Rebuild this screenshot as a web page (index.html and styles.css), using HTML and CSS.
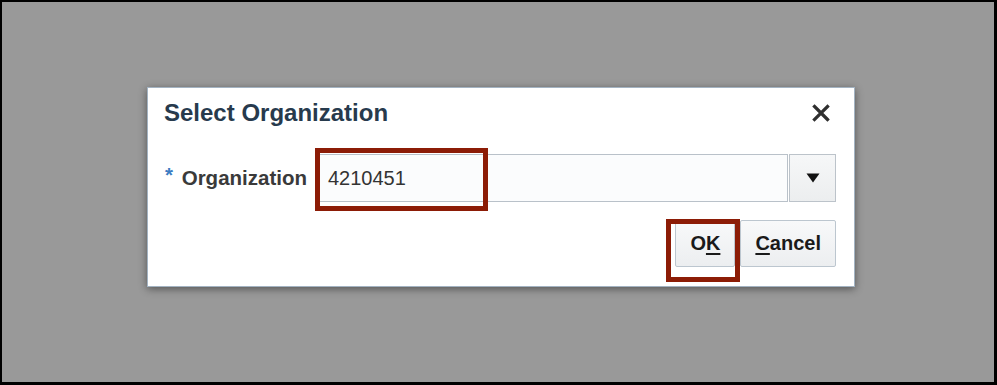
FILE: index.html
```html
<!DOCTYPE html>
<html>
<head>
<meta charset="utf-8">
<link rel="stylesheet" href="styles.css">
</head>
<body>
<div class="frame">
  <div class="dialog">
    <div class="title-row">
      <h1 class="title">Select Organization</h1>
      <svg class="close" width="18" height="18" viewBox="0 0 18 18" aria-label="Close">
        <path d="M2.5 2.5 L15.5 15.5 M15.5 2.5 L2.5 15.5" stroke="#2f2f2f" stroke-width="3.2" stroke-linecap="square" fill="none"/>
      </svg>
    </div>
    <div class="field-row">
      <label class="label"><span class="req">*</span> Organization</label>
      <div class="combo">
        <div class="input">4210451</div>
        <div class="drop">
          <svg width="14" height="10" viewBox="0 0 14 10"><path d="M0.5 0.5 H13.5 L7 9.5 Z" fill="#111"/></svg>
        </div>
      </div>
    </div>
    <div class="btn-row">
      <button class="btn btn-ok">O<u>K</u></button>
      <button class="btn btn-cancel"><u>C</u>ancel</button>
    </div>
    <div class="mark mark-input"></div>
    <div class="mark mark-ok"></div>
  </div>
</div>
</body>
</html>
```

FILE: styles.css
```css
html, body {
  margin: 0;
  padding: 0;
}
body {
  font-family: "Liberation Sans", Arial, sans-serif;
  background: #999999;
}
.frame {
  box-sizing: border-box;
  width: 997px;
  height: 385px;
  border-style: solid;
  border-color: #000;
  border-width: 2px 3px 3px 2px;
  background: #999999;
  padding: 85px 0 0 145px;
}
.dialog {
  position: relative;
  box-sizing: border-box;
  width: 708px;
  background: #ffffff;
  border: 1px solid #a3b3c2;
  box-shadow: 0 2px 8px rgba(0, 0, 0, 0.45);
  padding: 11px 18px 19px 16px;
}
.title-row {
  display: flex;
  align-items: center;
  justify-content: space-between;
  height: 28px;
}
.title {
  margin: 0;
  font-size: 24px;
  line-height: 28px;
  font-weight: bold;
  color: #273a4d;
}
.close {
  display: block;
  margin-right: 6px;
}
.field-row {
  display: flex;
  align-items: center;
  margin-top: 27px;
}
.label {
  font-size: 20.5px;
  font-weight: bold;
  color: #3a3a3a;
  margin-left: 1px;
  margin-right: 12px;
  white-space: nowrap;
}
.req {
  color: #3b7cc2;
  position: relative;
  top: -3px;
  margin-right: 3px;
}
.combo {
  flex: 1;
  display: flex;
  height: 48px;
}
.input {
  flex: 1;
  box-sizing: border-box;
  height: 48px;
  border: 1px solid #b9c1c9;
  background: #fbfcfd;
  font-size: 20px;
  line-height: 46px;
  color: #333333;
  padding-left: 8px;
}
.drop {
  box-sizing: border-box;
  width: 47px;
  height: 48px;
  margin-left: 1px;
  border: 1px solid #bcc3ca;
  background: linear-gradient(#f6f7f8, #eceeef);
  display: flex;
  align-items: center;
  justify-content: center;
}
.btn-row {
  display: flex;
  justify-content: flex-end;
  gap: 5px;
  margin-top: 18px;
}
.btn {
  box-sizing: border-box;
  height: 47px;
  border: 1px solid #bcc6cf;
  border-radius: 2px;
  background: linear-gradient(#f8f9fa, #eceef0);
  font-family: "Liberation Sans", Arial, sans-serif;
  font-size: 20px;
  font-weight: bold;
  color: #1a1a1a;
  padding: 0 14px;
}
.btn u {
  text-decoration-thickness: 2px;
  text-underline-offset: 3px;
}
.mark {
  position: absolute;
  box-sizing: border-box;
  border: 5px solid #8c1c06;
}
.mark-input {
  left: 167px;
  top: 60px;
  width: 173px;
  height: 63px;
}
.mark-ok {
  left: 518px;
  top: 131px;
  width: 74px;
  height: 63px;
}
```
